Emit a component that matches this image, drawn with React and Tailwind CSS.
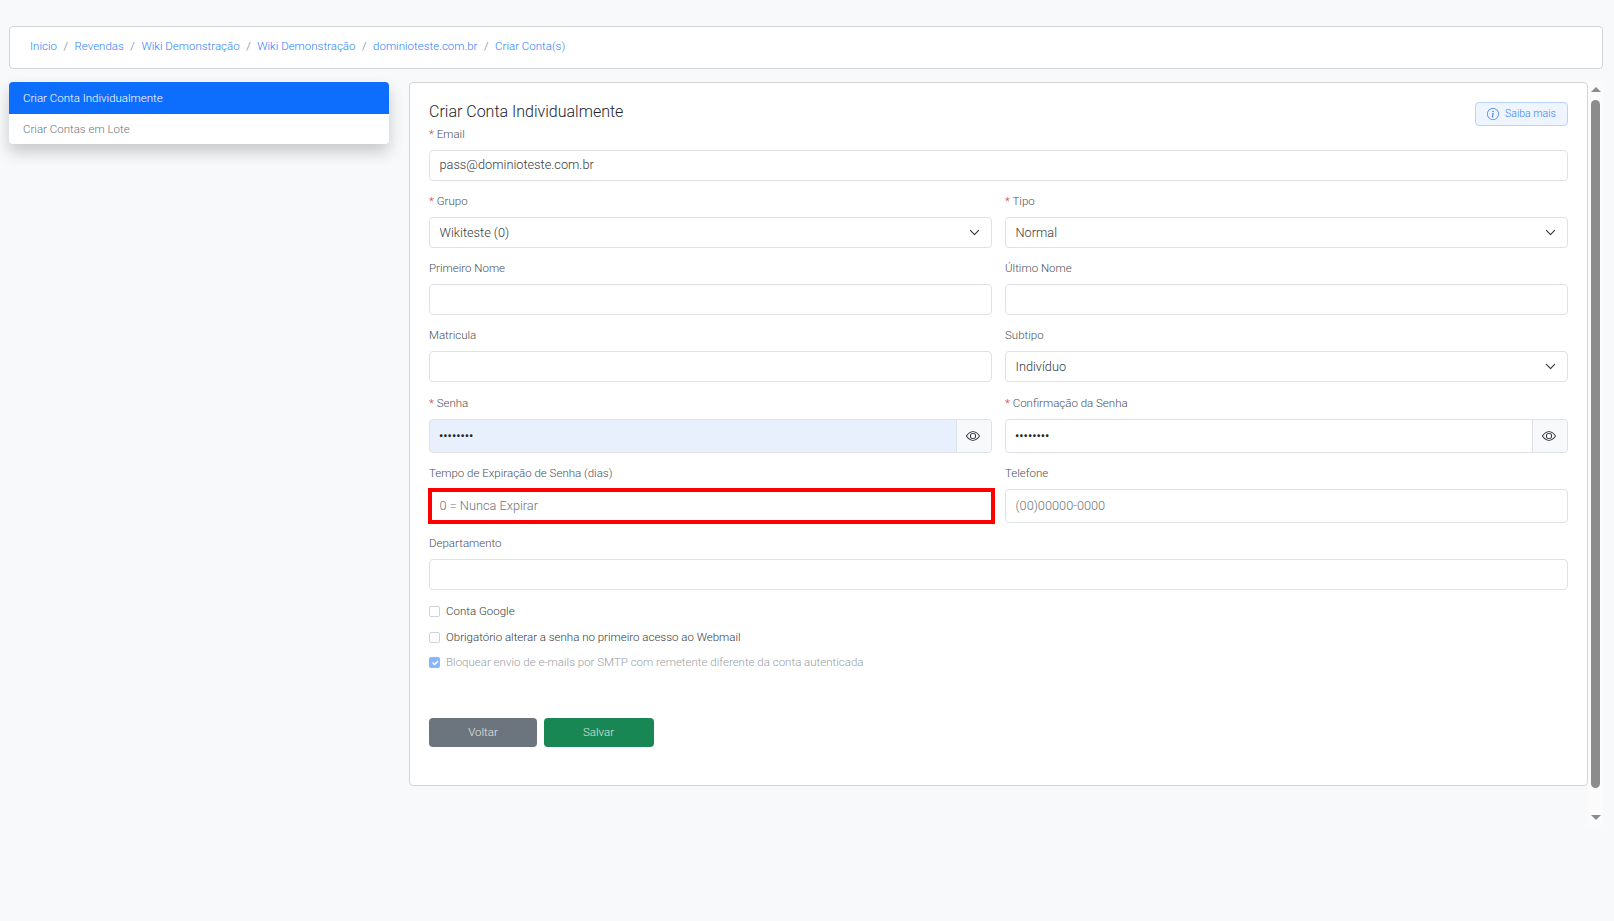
import React from 'react'
import { BsEye, BsInfoCircle } from 'react-icons/bs'

const inputClass = 'block w-full rounded-[4px] border border-[#dee2e6] bg-white text-[12.75px] font-light text-[#343a40] outline-none placeholder:text-[#6c757d]'

function Label({children, required}){
  return (
    <label className="mb-[7px] block h-[18px] text-[11.5px] leading-[18px] font-light text-[#495057]">
      {required && <span className="text-[#dc3545]">* </span>}
      {children}
    </label>
  )
}

function Field({label, required, className = 'mb-[11px]', children}){
  return (
    <div className={className}>
      <Label required={required}>{label}</Label>
      {children}
    </div>
  )
}

function TextInput({value = '', placeholder}){
  return <input readOnly value={value} placeholder={placeholder} className={`${inputClass} h-[31px] px-[9.5px] pb-[2px]`} />
}

function SelectInput({value}){
  return (
    <div className="relative">
      <select value={value} onChange={() => {}} className={`${inputClass} h-[31px] appearance-none pl-[9.5px]`}>
        <option>{value}</option>
      </select>
      <svg viewBox="0 0 16 16" className="pointer-events-none absolute top-[10px] right-[12px] h-[11px] w-[11px]" fill="none" stroke="#343a40" strokeWidth="1.7" strokeLinecap="round" strokeLinejoin="round">
        <path d="m2 5 6 6 6-6" />
      </svg>
    </div>
  )
}

function PasswordInput({filled}){
  return (
    <div className="flex h-[34px]">
      <input readOnly type="password" value="12345678" className={`h-full min-w-0 flex-1 rounded-l-[4px] border border-[#dee2e6] pb-[1px] pl-[9px] text-[12.75px] text-[#212529] outline-none ${filled ? 'bg-[#e8f0fe]' : 'bg-white'}`} />
      <div className="-ml-px flex w-[36px] items-center justify-center rounded-r-[4px] border border-[#dee2e6] bg-[#f8f9fa] pr-[2px] text-[#212529]">
        <BsEye className="h-[14px] w-[14px]" />
      </div>
    </div>
  )
}

function Check({label, checked}){
  return (
    <div className="flex h-[25.5px] items-center gap-[6px]">
      {checked ? (
        <span className="flex h-[11px] w-[11px] items-center justify-center rounded-[2px] bg-[#86b7fe]">
          <svg viewBox="0 0 20 20" className="h-[10px] w-[10px]" fill="none" stroke="#fff" strokeWidth="3" strokeLinecap="round" strokeLinejoin="round"><path d="m6 10 3 3 6-6" /></svg>
        </span>
      ) : (
        <span className="h-[11px] w-[11px] rounded-[2px] border border-[#ced4da] bg-white" />
      )}
      <span className={`text-[11.5px] font-light ${checked ? 'text-[#6c757d] opacity-70' : 'text-[#343a40]'}`}>{label}</span>
    </div>
  )
}

const crumbs = ['Inicio', 'Revendas', 'Wiki Demonstração', 'Wiki Demonstração', 'dominioteste.com.br', 'Criar Conta(s)']

export default function App(){
  return (
    <div className="min-h-[921px] bg-[#f8f9fa] pt-[26px] pr-[11px] pl-[9px] font-['Roboto',sans-serif]">
      <nav className="mb-[13px] flex h-[43px] items-center rounded-[4px] border border-[#d3d5d7] bg-white pb-[2px] pl-[20px] text-[11.5px] font-light">
        {crumbs.map((crumb, i) => (
          <React.Fragment key={i}>
            {i > 0 && <span className="px-[6.5px] text-[#6c757d]">/</span>}
            <a className="text-[#2f7ffd]">{crumb}</a>
          </React.Fragment>
        ))}
      </nav>

      <div className="flex items-start">
        <aside className="mr-[20px] w-[380px] shrink-0 overflow-hidden rounded-[4px] bg-white text-[11.5px] font-light shadow-[0_8px_16px_rgba(0,0,0,0.2)]">
          <div className="flex h-[32px] items-center bg-[#0d6efd] px-[14px] pt-[1px] text-white">Criar Conta Individualmente</div>
          <div className="flex h-[30px] items-center px-[14px] pt-[1px] text-[#6c757d]">Criar Contas em Lote</div>
        </aside>

        <main className="h-[704px] min-w-0 flex-1 rounded-[4px] border border-[#d3d5d7] bg-white pt-[15px] pr-[19px] pl-[19px]">
          <div className="flex h-[27px] items-start justify-between">
            <h1 className="text-[16px] leading-[28px] font-light text-[#212529]">Criar Conta Individualmente</h1>
            <button className="mt-[4px] flex h-[24px] w-[93px] items-center justify-center gap-[6px] rounded-[4px] border border-[#b6d4fe] bg-[#eef5ff] text-[10.5px] font-light text-[#3d7bfd]">
              <BsInfoCircle className="h-[12px] w-[12px]" />
              Saiba mais
            </button>
          </div>

          <Field label="Email" required><TextInput value="pass@dominioteste.com.br" /></Field>

          <div className="grid grid-cols-2 gap-x-[13px]">
            <Field label="Grupo" required><SelectInput value="Wikiteste (0)" /></Field>
            <Field label="Tipo" required><SelectInput value="Normal" /></Field>
            <Field label="Primeiro Nome"><TextInput /></Field>
            <Field label="Último Nome"><TextInput /></Field>
            <Field label="Matricula" className="mb-[12px]"><TextInput /></Field>
            <Field label="Subtipo" className="mb-[12px]"><SelectInput value="Indivíduo" /></Field>
            <Field label="Senha" required><PasswordInput filled /></Field>
            <Field label="Confirmação da Senha" required><PasswordInput /></Field>
            <Field label="Tempo de Expiração de Senha (dias)">
              <div className="relative">
                <input readOnly placeholder="0 = Nunca Expirar" className={`${inputClass} h-[34px] px-[9.5px] pb-[1px]`} />
                <div className="absolute -top-[1px] -right-[3px] -bottom-[1px] -left-px border-[4px] border-[#ff0000]" />
              </div>
            </Field>
            <Field label="Telefone">
              <input readOnly placeholder="(00)00000-0000" className={`${inputClass} h-[34px] px-[9.5px] pb-[1px]`} />
            </Field>
          </div>

          <Field label="Departamento" className="mb-[9px]"><TextInput /></Field>

          <Check label="Conta Google" />
          <Check label="Obrigatório alterar a senha no primeiro acesso ao Webmail" />
          <Check label="Bloquear envio de e-mails por SMTP com remetente diferente da conta autenticada" checked />

          <div className="mt-[42.5px] flex gap-[7px]">
            <button className="h-[29px] w-[108px] rounded-[4px] bg-[#6c757d] text-[11.5px] font-light text-white/80">Voltar</button>
            <button className="h-[29px] w-[110px] rounded-[4px] bg-[#198754] pr-[1px] text-[11.5px] font-light text-white/80">Salvar</button>
          </div>
        </main>

        <div className="flex h-[744px] w-[15px] shrink-0 flex-col items-center bg-[#fbfbfb] pt-[5px]">
          <div className="h-0 w-0 border-x-[5px] border-b-[5px] border-x-transparent border-b-[#8c8c8c]" />
          <div className="mt-[8px] h-[688px] w-[9px] rounded-full bg-[#8c8c8c]" />
          <div className="mt-[27px] h-0 w-0 border-x-[5px] border-t-[5px] border-x-transparent border-t-[#8c8c8c]" />
        </div>
      </div>
    </div>
  )
}
